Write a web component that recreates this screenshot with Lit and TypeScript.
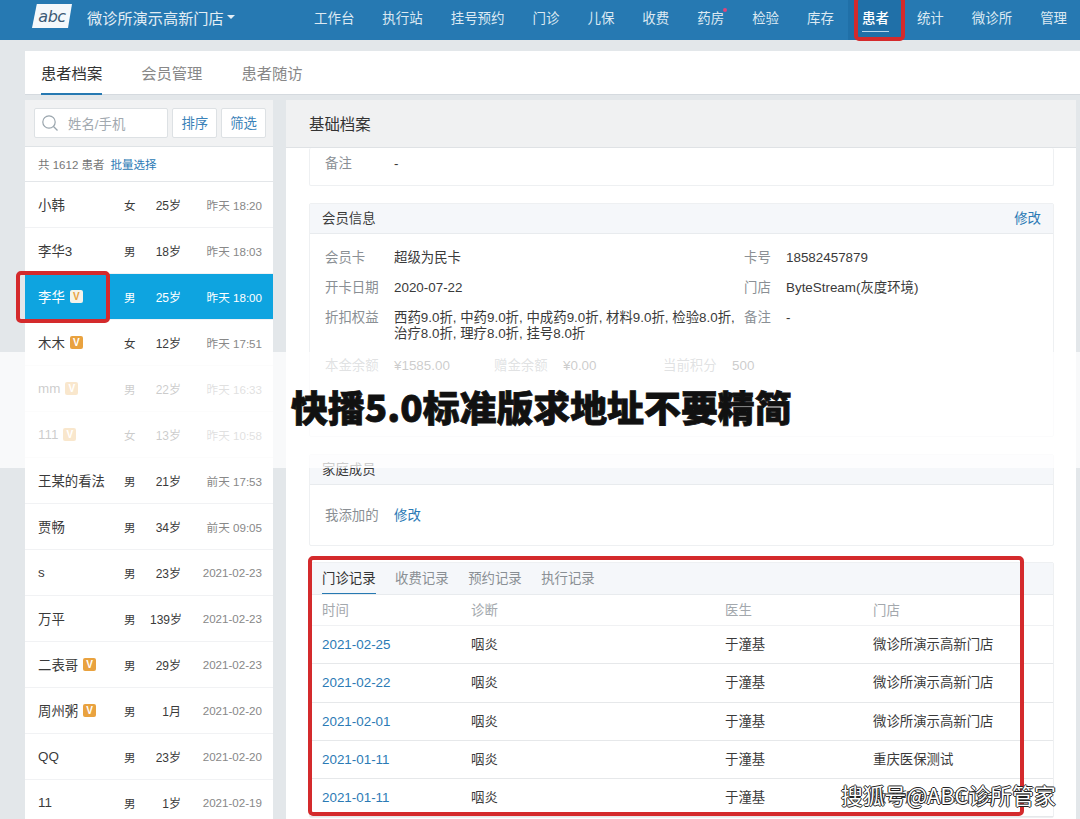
import { LitElement, css, html } from "lit";
import { customElement } from "lit/decorators.js";

const NAV = ["工作台", "执行站", "挂号预约", "门诊", "儿保", "收费", "药房", "检验", "库存", "患者", "统计", "微诊所", "管理"];

const PATIENTS = [
    { name: "小韩", sex: "女", age: "25岁", time: "昨天 18:20" },
    { name: "李华3", sex: "男", age: "18岁", time: "昨天 18:03" },
    { name: "李华", sex: "男", age: "25岁", time: "昨天 18:00", vip: true, active: true },
    { name: "木木", sex: "女", age: "12岁", time: "昨天 17:51", vip: true },
    { name: "mm", sex: "男", age: "22岁", time: "昨天 16:33", vip: true },
    { name: "111", sex: "女", age: "13岁", time: "昨天 10:58", vip: true },
    { name: "王某的看法", sex: "男", age: "21岁", time: "前天 17:53" },
    { name: "贾畅", sex: "男", age: "34岁", time: "前天 09:05" },
    { name: "s", sex: "男", age: "23岁", time: "2021-02-23" },
    { name: "万平", sex: "男", age: "139岁", time: "2021-02-23" },
    { name: "二表哥", sex: "男", age: "29岁", time: "2021-02-23", vip: true },
    { name: "周州粥", sex: "男", age: "1月", time: "2021-02-20", vip: true },
    { name: "QQ", sex: "男", age: "23岁", time: "2021-02-20" },
    { name: "11", sex: "男", age: "1岁", time: "2021-02-19" },
];

const RECORDS = [
    { date: "2021-02-25", store: "微诊所演示高新门店" },
    { date: "2021-02-22", store: "微诊所演示高新门店" },
    { date: "2021-02-01", store: "微诊所演示高新门店" },
    { date: "2021-01-11", store: "重庆医保测试" },
    { date: "2021-01-11", store: "微诊所演示高新门店" },
];

@customElement("app-root")
export class AppRoot extends LitElement {
    renderNav() {
        return html`
            <header class="nav">
                <div class="logo"><span>abc</span></div>
                <div class="store">微诊所演示高新门店<i class="caret"></i></div>
                <nav class="menu">
                    ${NAV.map(
                        (item) => html`<a class="menu-item ${item === "患者" ? "on" : ""}">
                            ${item}${item === "药房" ? html`<b class="dot"></b>` : ""}
                        </a>`,
                    )}
                </nav>
            </header>
        `;
    }

    renderPatients() {
        return html`
            <aside class="left">
                <div class="search">
                    <div class="input">
                        <svg width="18" height="18" viewBox="0 0 18 18" fill="none" stroke="#9aa5ad" stroke-width="1.2">
                            <circle cx="8" cy="8" r="6.2"></circle>
                            <path d="M12.5 12.5L16.5 16.5"></path>
                        </svg>
                        <span>姓名/手机</span>
                    </div>
                    <button class="btn">排序</button>
                    <button class="btn">筛选</button>
                </div>
                <div class="count">共 1612 患者<a>批量选择</a></div>
                ${PATIENTS.map(
                    (p) => html`<div class="patient ${p.active ? "active" : ""}">
                        <div class="p-name">${p.name}${p.vip ? html`<span class="vip">V</span>` : ""}</div>
                        <div class="p-sex">${p.sex}</div>
                        <div class="p-age">${p.age}</div>
                        <div class="p-time">${p.time}</div>
                    </div>`,
                )}
            </aside>
        `;
    }

    renderDetail() {
        return html`
            <section class="right">
                <div class="right-head">基础档案</div>
                <div class="right-body">
                    <div class="card first">
                        <div class="kv"><label>备注</label><span>-</span></div>
                    </div>
                    <div class="card member">
                        <div class="card-head"><span>会员信息</span><a>修改</a></div>
                        <div class="grid">
                            <div class="kv"><label>会员卡</label><span>超级为民卡</span></div>
                            <div class="kv short"><label>卡号</label><span>18582457879</span></div>
                            <div class="kv"><label>开卡日期</label><span>2020-07-22</span></div>
                            <div class="kv short"><label>门店</label><span>ByteStream(灰度环境)</span></div>
                            <div class="kv">
                                <label>折扣权益</label>
                                <span class="rights">西药9.0折, 中药9.0折, 中成药9.0折, 材料9.0折, 检验8.0折, 治疗8.0折, 理疗8.0折, 挂号8.0折</span>
                            </div>
                            <div class="kv short"><label>备注</label><span>-</span></div>
                        </div>
                        <div class="balance">
                            <div class="kv"><label>本金余额</label><span>¥1585.00</span></div>
                            <div class="kv"><label>赠金余额</label><span>¥0.00</span></div>
                            <div class="kv"><label>当前积分</label><span>500</span></div>
                        </div>
                    </div>
                    <div class="card family">
                        <div class="card-head"><span>家庭成员</span></div>
                        <div class="kv fam-row"><label>我添加的</label><a>修改</a></div>
                    </div>
                    <div class="card records">
                        <div class="card-head tabs2">
                            <span class="on">门诊记录</span><span>收费记录</span><span>预约记录</span><span>执行记录</span>
                        </div>
                        <div class="rec-row rec-title"><div>时间</div><div>诊断</div><div>医生</div><div>门店</div></div>
                        ${RECORDS.map(
                            (r) => html`<div class="rec-row">
                                <a>${r.date}</a><div>咽炎</div><div>于潼基</div><div>${r.store}</div>
                            </div>`,
                        )}
                    </div>
                </div>
            </section>
        `;
    }

    render() {
        return html`
            ${this.renderNav()}
            <div class="page">
                <div class="tabs">
                    <a class="tab on">患者档案</a>
                    <a class="tab">会员管理</a>
                    <a class="tab">患者随访</a>
                </div>
                <div class="main">${this.renderPatients()} ${this.renderDetail()}</div>
            </div>
            <div class="mark mark-nav"></div>
            <div class="mark mark-patient"></div>
            <div class="mark mark-records"></div>
            <div class="band"><h1>快播5.0标准版求地址不要精简</h1></div>
            <div class="watermark">搜狐号@ABC诊所管家</div>
        `;
    }

    static styles = css`
        :host {
            display: block;
            position: relative;
            width: 1080px;
            height: 819px;
            overflow: hidden;
            background: #e3e7ea;
            color: #3a3a3a;
            font-family: "Liberation Sans", "Noto Sans CJK SC", sans-serif;
            font-size: 13.4px;
        }

        a {
            color: #2b7ab5;
        }

        .nav {
            display: flex;
            isolation: isolate;
            align-items: flex-start;
            height: 40px;
            padding-left: 32px;
            background: #2679b2;
            color: #e4eef5;
        }

        .logo {
            display: flex;
            align-items: center;
            justify-content: center;
            width: 40px;
            height: 24px;
            margin-top: 4px;
            background: #f4f8fb;
            clip-path: polygon(12% 0, 100% 0, 90% 100%, 0 100%);
        }

        .logo span {
            color: #3d5a75;
            font: italic 16px "DejaVu Sans", sans-serif;
            letter-spacing: -0.5px;
        }

        .store {
            display: flex;
            align-items: center;
            width: 227px;
            height: 34px;
            margin-left: 15px;
            font-size: 15.2px;
            white-space: nowrap;
        }

        .caret {
            margin-left: 3px;
            border: 4px solid transparent;
            border-top: 4px solid #e4eef5;
            border-bottom: 0;
        }

        .menu {
            display: flex;
            gap: 28px;
            height: 34px;
            font-size: 13.46px;
        }

        .menu-item {
            position: relative;
            display: flex;
            align-items: center;
            height: 34px;
            color: #dce9f2;
            white-space: nowrap;
        }

        .menu-item.on {
            color: #fff;
            font-weight: 500;
        }

        .menu-item.on::before {
            content: "";
            position: absolute;
            inset: 0 -14px -6px;
            z-index: -1;
            background: #2070a8;
        }

        .menu-item.on::after {
            content: "";
            position: absolute;
            left: 0;
            right: 0;
            bottom: 2px;
            height: 1px;
            background: #b8d8ee;
        }

        .dot {
            position: absolute;
            top: 8px;
            right: -3px;
            width: 4px;
            height: 4px;
            border-radius: 50%;
            background: #e0457a;
        }

        .page {
            padding: 11px 0 0 25px;
        }

        .tabs {
            display: flex;
            gap: 39px;
            height: 44px;
            padding-left: 16px;
            background: #fff;
            border-bottom: 1px solid #d5dadf;
            box-sizing: border-box;
        }

        .tab {
            height: 44px;
            box-sizing: border-box;
            padding-top: 13px;
            color: #888;
            font-size: 15.3px;
            line-height: 20px;
        }

        .tab.on {
            color: #333;
            border-bottom: 2px solid #2679b2;
        }

        .main {
            display: flex;
            gap: 12px;
            margin-top: 5px;
        }

        .left {
            flex: none;
            width: 248px;
            background: #fff;
        }

        .search {
            display: flex;
            gap: 4px;
            height: 47px;
            padding: 8px 7px 0 9px;
            box-sizing: border-box;
            background: #f1f2f3;
            border-bottom: 1px solid #dfe3e6;
        }

        .input {
            display: flex;
            align-items: center;
            gap: 9px;
            width: 135px;
            height: 30px;
            padding: 0 0 1px 6px;
            box-sizing: border-box;
            background: #fff;
            border: 1px solid #dde1e4;
            border-radius: 2px;
            color: #a2a9af;
        }

        .btn {
            width: 45px;
            height: 30px;
            padding: 0 0 2px;
            background: #fff;
            border: 1px solid #dde1e4;
            border-radius: 2px;
            color: #3a82b8;
            font: inherit;
        }

        .count {
            display: flex;
            align-items: center;
            gap: 6px;
            height: 35px;
            padding-left: 13px;
            box-sizing: border-box;
            border-bottom: 1px solid #e3e6e9;
            color: #777;
            font-size: 11.5px;
        }

        .patient {
            display: grid;
            grid-template-columns: 86px 26px 31px 81px;
            align-items: center;
            height: 46px;
            padding-left: 13px;
            box-sizing: border-box;
            border-bottom: 1px solid #f1f2f4;
        }

        .patient.active {
            background: #0ea4e0;
            color: #fff;
        }

        .p-name {
            display: flex;
            align-items: center;
            gap: 5px;
            padding-bottom: 1px;
            white-space: nowrap;
        }

        .vip {
            display: inline-flex;
            align-items: center;
            justify-content: center;
            width: 13px;
            height: 13px;
            border-radius: 2px;
            background: #e9a23f;
            color: #fff;
            font-size: 10px;
            font-weight: 700;
        }

        .active .vip {
            background: #f4f3ea;
            color: #e9a23f;
        }

        .p-sex {
            font-size: 11.5px;
        }

        .p-age {
            font-size: 12px;
            text-align: right;
            white-space: nowrap;
        }

        .p-time {
            color: #888;
            font-size: 11.6px;
            text-align: right;
            white-space: nowrap;
        }

        .active .p-time {
            color: #fff;
        }

        .right {
            flex: none;
            width: 790px;
            margin-left: 1px;
            background: #fff;
            border-radius: 3px 3px 0 0;
        }

        .right-head {
            height: 48px;
            padding-left: 23px;
            box-sizing: border-box;
            background: #f0f1f2;
            border-bottom: 1px solid #dfe2e5;
            color: #333;
            font-size: 15.4px;
            line-height: 50px;
        }

        .right-body {
            padding: 0 22px 0 23px;
        }

        .card {
            margin-bottom: 17px;
            border: 1px solid #eef0f2;
            border-radius: 2px;
            box-sizing: border-box;
        }

        .card.first {
            height: 38px;
            border-top: 0;
            padding: 8px 0 0 15px;
        }

        .card-head {
            display: flex;
            align-items: center;
            justify-content: space-between;
            height: 30px;
            padding: 0 12px 3px;
            box-sizing: border-box;
            background: #f5f7fa;
            border-bottom: 1px solid #e8ebee;
        }

        .kv {
            display: flex;
            gap: 15px;
            line-height: 16px;
        }

        .kv label {
            flex: none;
            width: 54px;
            color: #8a8f94;
        }

        .kv.short label {
            width: 27px;
        }

        .member {
            height: 234px;
        }

        .grid {
            display: grid;
            grid-template-columns: 419px 1fr;
            row-gap: 14.2px;
            padding: 16px 0 0 15px;
        }

        .rights {
            width: 345px;
        }

        .balance {
            display: grid;
            grid-template-columns: 169px 169px 1fr;
            padding: 16px 0 0 15px;
        }

        .family {
            height: 92px;
            margin-bottom: 16px;
        }

        .fam-row {
            padding: 23px 0 0 15px;
        }

        .records {
            margin: 0;
        }

        .tabs2 {
            justify-content: flex-start;
            align-items: stretch;
            gap: 19.5px;
            height: 32px;
            padding: 0 0 0 12px;
            color: #8a8f94;
            line-height: 32px;
        }

        .tabs2 .on {
            height: 30px;
            color: #333;
            border-bottom: 1px solid #2679b2;
        }

        .rec-row {
            display: grid;
            grid-template-columns: 149px 254px 148px 1fr;
            align-items: center;
            height: 38.3px;
            padding-left: 12px;
            box-sizing: border-box;
            border-bottom: 1px solid #e6e8ea;
        }

        .rec-row div {
            padding-bottom: 3px;
        }

        .rec-title {
            height: 31px;
            color: #a3a8ad;
            border-bottom-color: #f0f1f3;
        }

        /* annotations drawn over the screenshot */
        .mark {
            position: absolute;
            box-sizing: border-box;
            border: 4px solid #d42a2c;
            border-radius: 5px;
        }

        .mark-nav {
            left: 854px;
            top: -4px;
            width: 51px;
            height: 45px;
        }

        .mark-patient {
            left: 16px;
            top: 271px;
            width: 94px;
            height: 52px;
        }

        .mark-records {
            left: 308px;
            top: 556px;
            width: 716px;
            height: 260px;
        }

        .band {
            position: absolute;
            left: 0;
            top: 352px;
            width: 100%;
            height: 116px;
            background: rgba(255, 255, 255, 0.74);
        }

        .band h1 {
            margin: 34px 0 0 291px;
            color: #111;
            font-family: "Noto Sans CJK SC", sans-serif;
            font-size: 36.9px;
            font-weight: 900;
            line-height: 40px;
            -webkit-text-stroke: 0.8px #111;
            white-space: nowrap;
        }

        .watermark {
            position: absolute;
            left: 841px;
            top: 782px;
            color: #fff;
            font-family: "Noto Sans CJK SC", sans-serif;
            font-size: 21.8px;
            line-height: 26px;
            white-space: nowrap;
            text-shadow: -1px 0 #222, 1px 0 #222, 0 -1px #222, 0 1px #222;
        }
    `;
}
